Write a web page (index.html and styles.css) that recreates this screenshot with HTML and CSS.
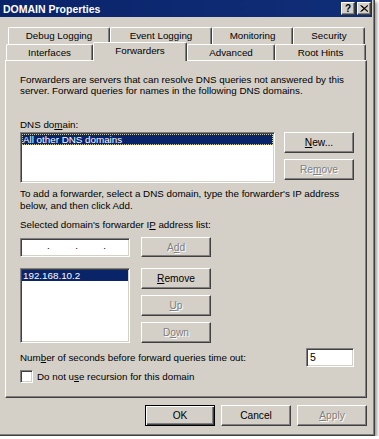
FILE: index.html
```html
<!DOCTYPE html>
<html lang="en">
<head>
    <meta charset="UTF-8">
    <title>DOMAIN Properties</title>
    <link rel="stylesheet" href="styles.css">
</head>
<body>
<div class="window">
    <div class="titlebar">
        <span class="title">DOMAIN Properties</span>
        <span class="capbtn help">?</span>
        <span class="capbtn close">
            <svg width="8" height="7" viewBox="0 0 8 7"><path d="M0.5 0.5 L7.5 6.5 M1.5 0.5 L8 6.5 M7.5 0.5 L0.5 6.5 M8 0.5 L1.5 6.5" stroke="#000" stroke-width="1"/></svg>
        </span>
    </div>

    <div class="tabs">
        <div class="tabrow back">
            <div class="tab w102">Debug Logging</div>
            <div class="tab w102">Event Logging</div>
            <div class="tab w81">Monitoring</div>
            <div class="tab w72">Security</div>
        </div>
        <div class="tabrow front">
            <div class="tab w87">Interfaces</div>
            <div class="tab w94 selected">Forwarders</div>
            <div class="tab w88">Advanced</div>
            <div class="tab w91">Root Hints</div>
        </div>
    </div>

    <div class="panel">
        <p class="intro">Forwarders are servers that can resolve DNS queries not answered by this server. Forward queries for names in the following DNS domains.</p>

        <div class="label dns-label">DNS do<u>m</u>ain:</div>
        <div class="dns-row">
            <div class="listbox dns-list">
                <div class="item sel focus">All other DNS domains</div>
            </div>
            <div class="btncol">
                <div class="btn"><u>N</u>ew...</div>
                <div class="btn disabled">Re<u>m</u>ove</div>
            </div>
        </div>

        <p class="hint">To add a forwarder, select a DNS domain, type the forwarder's IP address below, and then click Add.</p>

        <div class="label ip-label">Selected domain's forwarder I<u>P</u> address list:</div>
        <div class="ip-row">
            <div class="field ipbox">
                <span>.</span><span>.</span><span>.</span>
            </div>
            <div class="btn disabled">A<u>d</u>d</div>
        </div>

        <div class="list-row">
            <div class="listbox ip-list">
                <div class="item sel">192.168.10.2</div>
            </div>
            <div class="btncol">
                <div class="btn"><u>R</u>emove</div>
                <div class="btn disabled"><u>U</u>p</div>
                <div class="btn disabled">D<u>o</u>wn</div>
            </div>
        </div>

        <div class="timeout-row">
            <span>Num<u>b</u>er of seconds before forward queries time out:</span>
            <div class="field secs">5</div>
        </div>

        <div class="check-row">
            <div class="checkbox"></div>
            <span>Do not u<u>s</u>e recursion for this domain</span>
        </div>
    </div>

    <div class="actions">
        <div class="btn default">OK</div>
        <div class="btn">Cancel</div>
        <div class="btn disabled"><u>A</u>pply</div>
    </div>
</div>
</body>
</html>
```
FILE: styles.css
```css
body
{
    margin: 0;
    background: #fff;
    font-family: "Liberation Sans", Arial, sans-serif;
    font-size: 9.8px;
    color: #000;
}

.window
{
    width: 375px;
    height: 436px;
    box-sizing: border-box;
    padding-right: 2px;
    background: #d4d0c8;
    border-right: 1px solid #404040;
    border-bottom: 1px solid #404040;
    box-shadow: inset -1px -1px 0 #808080, 2px 2px 3px rgba(0, 0, 0, 0.4);
}

/* caption */
.titlebar
{
    height: 17px;
    display: flex;
    align-items: center;
    padding-left: 3px;
    padding-right: 1px;
    background: linear-gradient(90deg, #0a246a, #102e78);
    color: #fff;
    font-weight: bold;
    font-size: 10.5px;
}
.title
{
    flex: 1;
}
.capbtn
{
    width: 14px;
    height: 13px;
    box-sizing: border-box;
    display: flex;
    align-items: center;
    justify-content: center;
    background: #d4d0c8;
    border: 1px solid;
    border-color: #fff #404040 #404040 #fff;
    box-shadow: inset -1px -1px 0 #808080;
    color: #000;
    font-size: 10px;
    font-weight: bold;
}
.help
{
    margin-right: 2px;
}

/* tabs */
.tabs
{
    padding-top: 10px;
}
.tabrow
{
    display: flex;
    align-items: flex-start;
}
.back
{
    margin-left: 8px;
    height: 17px;
}
.front
{
    margin-left: 6px;
    height: 16px;
}
.tab
{
    box-sizing: border-box;
    height: 100%;
    border: 1px solid;
    border-bottom: none;
    border-color: #fff #404040 #404040 #fff;
    border-radius: 2px 2px 0 0;
    box-shadow: inset -1px 0 0 #808080;
    text-align: center;
    line-height: 15px;
    background: #d4d0c8;
}
.back .tab
{
    line-height: 16px;
}
.tab.selected
{
    position: relative;
    z-index: 1;
    height: 19px;
    margin-top: -2px;
    line-height: 16px;
}
.w102 { width: 102px; }
.w81 { width: 81px; }
.w72 { width: 72px; }
.w87 { width: 87px; }
.w94 { width: 94px; }
.w88 { width: 88px; }
.w91 { width: 91px; }

/* page */
.panel
{
    margin-left: 5px;
    width: 362px;
    height: 338px;
    box-sizing: border-box;
    padding: 13px 12px 0 14px;
    border: 1px solid;
    border-color: #fff #404040 #404040 #fff;
    box-shadow: inset -1px -1px 0 #808080;
}
p
{
    margin: 0;
}
.intro
{
    line-height: 11px;
}
.label
{
    line-height: 11px;
}
.dns-label
{
    margin-top: 23px;
}
.dns-row
{
    display: flex;
    margin-top: 2px;
}
.hint
{
    margin-top: 5px;
    line-height: 12px;
}
.ip-label
{
    margin-top: 7px;
    line-height: 12px;
}
.ip-row
{
    display: flex;
    align-items: flex-start;
    margin-top: 6px;
}
.ip-row .btn
{
    height: 20px;
    margin-left: 11px;
}
.list-row
{
    display: flex;
    margin-top: 11px;
}
.list-row .btncol
{
    margin-left: 11px;
}
.timeout-row
{
    display: flex;
    align-items: center;
    margin-top: 5px;
}
.check-row
{
    display: flex;
    align-items: center;
    margin-top: 3px;
}

/* controls */
.listbox,
.field,
.checkbox
{
    box-sizing: border-box;
    background: #fff;
    border: 1px solid;
    border-color: #808080 #fff #fff #808080;
    box-shadow: inset 1px 1px 0 #404040, inset -1px -1px 0 #d4d0c8;
    padding: 1px;
}
.dns-list
{
    width: 255px;
    height: 51px;
}
.ip-list
{
    width: 110px;
    height: 75px;
}
.item
{
    line-height: 11px;
    padding-left: 1px;
}
.item.sel
{
    background: #0a246a;
    color: #fff;
}
.item.focus
{
    outline: 1px dotted #d8d080;
    outline-offset: -1px;
}
.ipbox
{
    width: 110px;
    height: 19px;
    margin-top: 1px;
    display: flex;
    justify-content: space-between;
    padding: 0 23px 0 26px;
    line-height: 14px;
}
.secs
{
    margin-left: auto;
    width: 48px;
    height: 19px;
    padding-left: 3px;
    line-height: 15px;
    font-size: 10.5px;
}
.checkbox
{
    width: 13px;
    height: 13px;
    margin-right: 4px;
}

.btncol
{
    display: flex;
    flex-direction: column;
    gap: 6px;
    margin-left: 9px;
}
.btn
{
    width: 70px;
    height: 21px;
    box-sizing: border-box;
    display: flex;
    align-items: center;
    justify-content: center;
    border: 1px solid;
    border-color: #fff #404040 #404040 #fff;
    box-shadow: inset -1px -1px 0 #808080;
    background: #d4d0c8;
    font-size: 10.2px;
}
.btn.disabled
{
    color: #808080;
    text-shadow: 1px 1px 0 #fff;
}
.btn.default
{
    border: 1px solid #000;
    box-shadow: inset 1px 1px 0 #fff, inset -1px -1px 0 #404040, inset -2px -2px 0 #808080;
}

.actions
{
    display: flex;
    justify-content: flex-end;
    gap: 6px;
    margin-top: 7px;
    margin-right: 5px;
}
```
